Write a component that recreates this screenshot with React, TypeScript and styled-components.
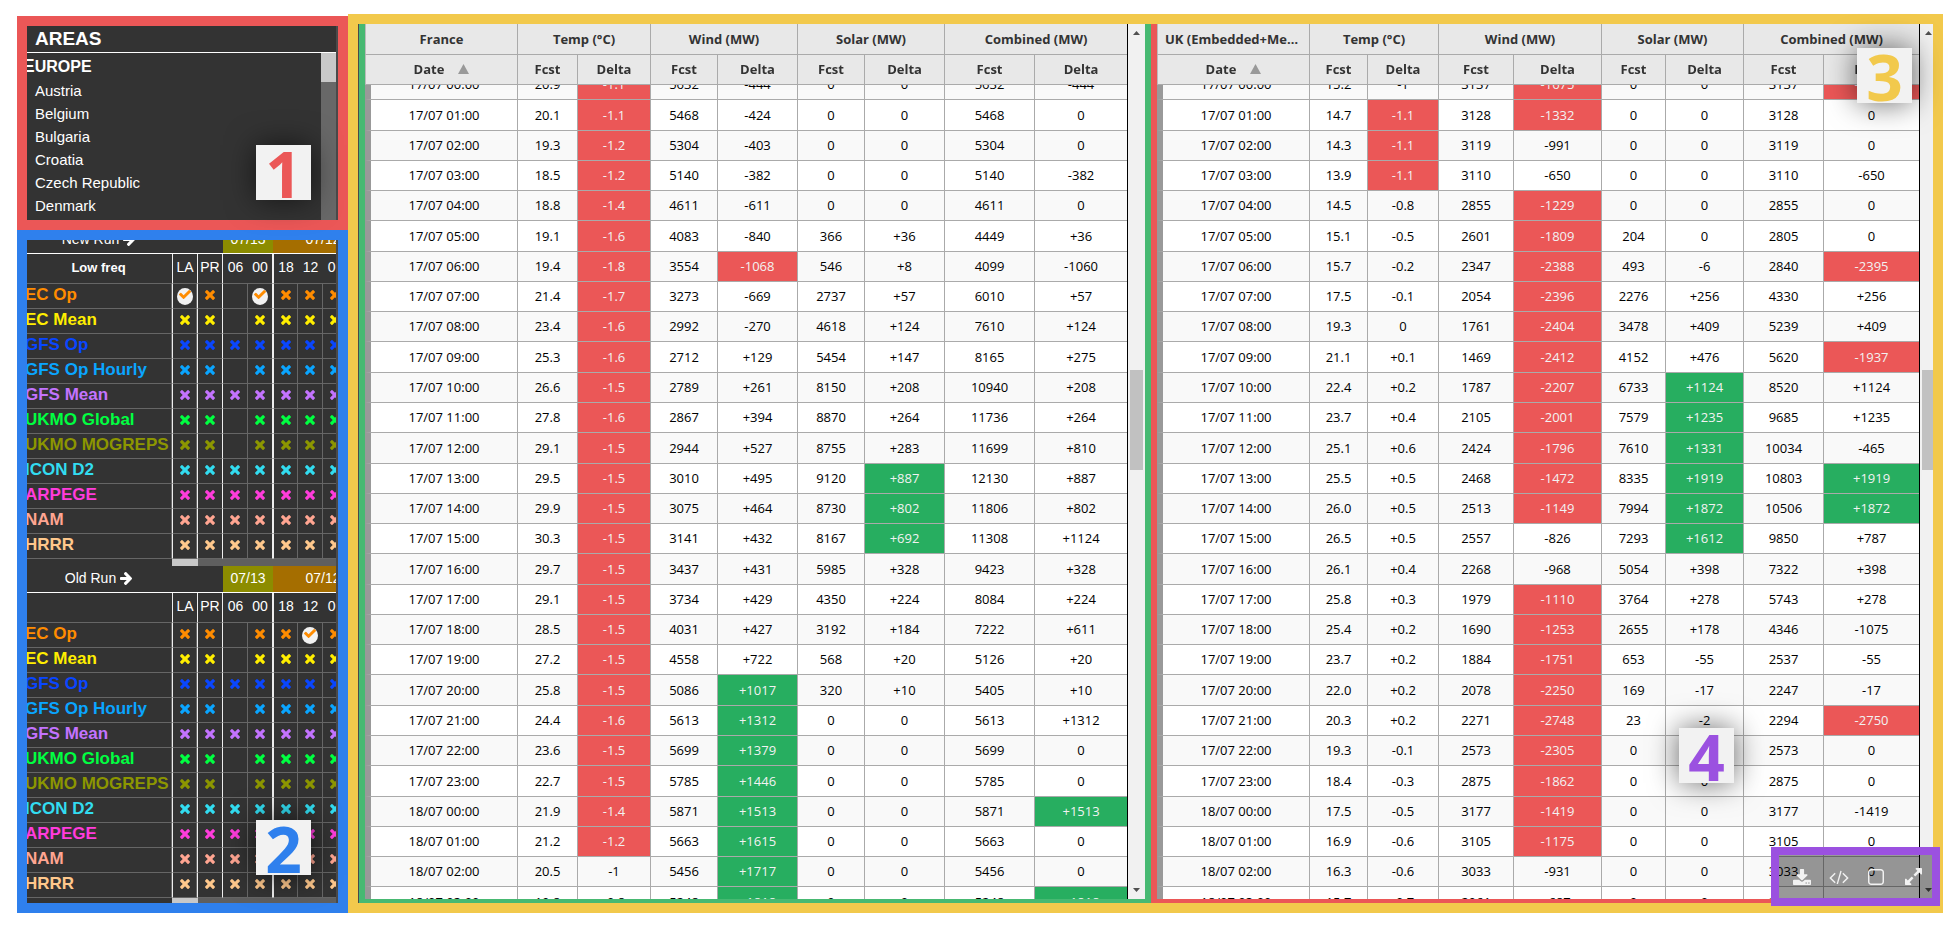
import React, { useLayoutEffect, useRef } from "react";
import styled, { createGlobalStyle } from "styled-components";

const GlobalStyle = createGlobalStyle`
  *, *::before, *::after { box-sizing: border-box; }
  body { margin: 0; background: #fff; }
  button { font: inherit; color: inherit; background: none; border: 0; padding: 0; cursor: pointer; }
  table { border-spacing: 0; table-layout: fixed; }
  th, td { padding: 0; }
`;

const red = "#eb5757";
const blue = "#2f80ed";
const yellow = "#f2c94c";
const purple = "#9b51e0";
const up = "#27ae60";
const dark = "#333";
const light = "#f2f2f2";

/* ---------- page frame ---------- */

const Page = styled.div`
  display: flex;
  height: 100vh;
  min-height: 500px;
  padding: 14px 13px 12px 17px;
`;

const Sidebar = styled.aside`
  display: flex;
  flex-direction: column;
  flex: 0 0 331px;
  min-width: 0;
  margin-top: 2px;
  color: #fff;
  font-family: "Liberation Sans", Arial, sans-serif;
`;

const Frame = styled.section<{ $color: string; $grow?: boolean }>`
  position: relative;
  display: flex;
  flex: ${(p) => (p.$grow ? "1 1 0" : "0 0 214px")};
  min-height: 0;
  border: 10px solid ${(p) => p.$color};
  background: #4a4a4a;
`;

const FrameBody = styled.div`
  flex: 1;
  min-width: 0;
  margin-right: 2px;
  overflow: hidden;
  background: ${dark};
`;

const Badge = styled.div<{ $color: string; $right: number; $top?: number; $bottom?: number }>`
  position: absolute;
  z-index: 2;
  right: ${(p) => p.$right}px;
  ${(p) => (p.$top !== undefined ? `top: ${p.$top}px;` : `bottom: ${p.$bottom}px;`)}
  width: 55px;
  height: 55px;
  background: ${light};
  box-shadow: 0 0 30px rgba(0, 0, 0, 0.6);
  color: ${(p) => p.$color};
  font: 700 64px/58px "Open Sans", sans-serif;
  text-align: center;
`;

/* ---------- areas list ---------- */

const AreasTitle = styled.h2`
  margin: 0;
  height: 27px;
  padding-left: 8px;
  border-bottom: 1px solid #fff;
  font-size: 19px;
  line-height: 26px;
`;

const AreasScroll = styled.div`
  display: flex;
  height: calc(100% - 27px);
`;

const AreasList = styled.ul`
  flex: 1;
  margin: 0;
  padding: 0;
  list-style: none;
  overflow: hidden;
`;

const Continent = styled.h3`
  margin: 0 0 0 -5px;
  font-size: 16px;
  line-height: 25px;
  text-transform: uppercase;

  &::first-letter {
    font-size: 19px;
  }
`;

const AreaButton = styled.button`
  display: block;
  width: 100%;
  padding-left: 8px;
  font-size: 15px;
  line-height: 23px;
  text-align: left;
`;

const AreasBar = styled.div`
  width: 15px;
  background: #686868;
`;

const AreasThumb = styled.div`
  height: 29px;
  background: #c8c8c8;
`;

/* ---------- model run tables ---------- */

const RunScroll = styled.div`
  margin: -13px 0 0 -2px;
`;

const RunTable = styled.table`
  width: 348px;
  font-size: 14px;
  text-align: center;
`;

const RunDay = styled.th<{ $bg?: string }>`
  height: 27px;
  padding-bottom: 2px;
  border-bottom: 1px solid #fff;
  background: ${(p) => p.$bg || dark};
  font-weight: 400;

  svg {
    width: 12px;
    height: 13px;
    margin-left: 4px;
    vertical-align: -2px;
  }
`;

const rule = { none: "0", thin: "1px solid #666", strong: "1px solid #eee" };
type Rule = keyof typeof rule;

const RunHour = styled.th<{ $left?: Rule; $right?: Rule }>`
  height: 30px;
  padding-bottom: 3px;
  border-bottom: 1px solid #666;
  border-left: ${(p) => rule[p.$left || "none"]};
  border-right: ${(p) => rule[p.$right || "none"]};
  font-weight: 400;
`;

const Freq = styled.span`
  font-size: 13px;
  font-weight: 700;
`;

const ModelName = styled.th<{ $color: string }>`
  height: 25px;
  padding-bottom: 3px;
  border-bottom: 1px solid #666;
  border-right: 1px solid #666;
  color: ${(p) => p.$color};
  font-size: 17px;
  font-weight: 700;
  line-height: 20px;
  text-align: left;
  white-space: nowrap;
`;

const RunCell = styled.td<{ $color: string; $left: Rule; $right: Rule }>`
  height: 25px;
  border-bottom: 1px solid #666;
  border-left: ${(p) => rule[p.$left]};
  border-right: ${(p) => rule[p.$right]};
  color: ${(p) => p.$color};
  line-height: 0;

  > svg {
    width: 10px;
    height: 10px;
    margin-bottom: 2px;
  }
`;

const Tick = styled.span`
  display: inline-flex;
  align-items: center;
  justify-content: center;
  width: 16px;
  height: 17px;
  padding-bottom: 3px;
  border-radius: 50%;
  background: ${light};

  svg {
    width: 12px;
    height: 9px;
  }
`;

const RunBar = styled.div`
  display: flex;
  height: 7px;
  padding-left: 147px;

  &::before {
    content: "";
    width: 26px;
    background: #c8c8c8;
  }

  &::after {
    content: "";
    flex: 1;
    background: #5f5f5f;
  }
`;

/* ---------- forecast panels ---------- */

const Main = styled.main`
  position: relative;
  flex: 1;
  min-width: 0;
  border: 10px solid ${yellow};
  color: #000;
  font: 13px/20px "Open Sans", sans-serif;
`;

const PanelClip = styled.div`
  height: 100%;
  overflow: hidden;
  border-left: 1px solid #4a4a4a;
`;

const Panels = styled.div`
  display: flex;
  height: 100%;
  margin-right: -10px;
`;

const Panel = styled.section<{ $color: string }>`
  display: flex;
  flex: 1 1 0;
  min-width: 0;
  border: solid ${(p) => p.$color};
  border-width: 0 6px 4px;
`;

const PanelScroll = styled.div`
  flex: 1;
  min-width: 0;
  overflow-y: auto;
  scrollbar-width: none;
`;

const PanelBar = styled.div`
  display: flex;
  flex: 0 0 18px;
  flex-direction: column;
  align-items: center;
  justify-content: space-between;
  padding: 7px 0;
  border-left: 1px solid #000;
  background: linear-gradient(#c1c1c1, #c1c1c1) 2px 346px / 13px 100px no-repeat #f1f1f1;
  color: #505050;

  svg {
    width: 7px;
    height: 4px;
  }
`;

const Grid = styled.table`
  width: 100%;
  text-align: center;

  thead {
    position: sticky;
    top: 0;
    z-index: 1;
  }
`;

const Col = styled.col<{ $w: number }>`
  width: ${(p) => p.$w}px;
`;

const GroupHead = styled.th`
  height: 31px;
  padding: 0 7px 1px;
  border-right: 1px solid #aaa;
  border-bottom: 1px solid #aaa;
  background: #e8e8e8;
  color: ${dark};
  font-weight: 700;
  overflow: hidden;
  text-overflow: ellipsis;
  white-space: nowrap;

  &:first-child { border-left: 1px solid #bbb; }
  &:last-child { border-right: 0; }
`;

const ColHead = styled(GroupHead)`
  height: 30px;
`;

const SortButton = styled.button`
  display: inline-flex;
  align-items: center;
  gap: 14px;
  font-weight: 700;

  svg {
    width: 11px;
    height: 10px;
    color: #999;
  }
`;

const HourRow = styled.tr`
  height: 30px;
  background: #fff;

  &:nth-child(odd) { background: #f9f9f9; }
  &:nth-child(11n + 2), &:nth-child(11n + 6), &:nth-child(11n + 10) { height: 31px; }
`;

const Cell = styled.td<{ $tone?: string }>`
  padding-bottom: 1px;
  border-right: 1px solid #aaa;
  border-bottom: 1px solid #aaa;
  background: ${(p) => p.$tone || "transparent"};
  color: ${(p) => (p.$tone ? light : "#000")};

  &:first-child { border-left: 6px solid #999; }
  &:last-child { border-right: 0; }
`;

const Toolbar = styled.div`
  position: absolute;
  z-index: 3;
  right: -7px;
  bottom: -3px;
  display: flex;
  width: 169px;
  height: 59px;
  padding: 0 0 0 4px;
  border: 8px solid ${purple};
  background: rgba(0, 0, 0, 0.4);
  background-clip: padding-box;
`;

const ToolButton = styled.button`
  display: flex;
  flex: 1;
  align-items: center;
  justify-content: center;
  color: ${light};

  svg { display: block; }
`;

/* ---------- icons ---------- */

const Glyph = ({ box, d, w, h }: { box: string; d: string; w?: number; h?: number }) => (
  <svg viewBox={box} width={w} height={h} fill="currentColor" preserveAspectRatio="none" aria-hidden="true">
    <path d={d} />
  </svg>
);

const Cross = () => (
  <Glyph
    box="302 366 1188 1188"
    d="M1490 1322q0 40-28 68l-136 136q-28 28-68 28t-68-28l-294-294-294 294q-28 28-68 28t-68-28l-136-136q-28-28-28-68t28-68l294-294-294-294q-28-28-28-68t28-68l136-136q28-28 68-28t68 28l294 294 294-294q28-28 68-28t68 28l136 136q28 28 28 68t-28 68l-294 294 294 294q28 28 28 68z"
  />
);

const Check = () => (
  <Glyph
    box="121 334 1550 1188"
    d="M1671 566q0 40-28 68l-724 724-136 136q-28 28-68 28t-68-28l-136-136-362-362q-28-28-28-68t28-68l136-136q28-28 68-28t68 28l294 295 656-657q28-28 68-28t68 28l136 136q28 28 28 68z"
  />
);

const Arrow = () => (
  <Glyph
    box="128 181 1472 1558"
    d="M1600 960q0 54-37 91l-651 651q-39 37-91 37-51 0-90-37l-75-75q-38-38-38-91t38-91l293-293h-704q-52 0-84.500-37.500t-32.500-90.500v-128q0-53 32.500-90.500t84.500-37.500h704l-293-294q-38-36-38-90t38-90l75-75q38-38 90-38 53 0 91 38l651 651q37 35 37 90z"
  />
);

const tools = [
  {
    label: "Download",
    box: "64 0 1664 1536",
    w: 18,
    h: 16,
    d: "M1344 1344q0-26-19-45t-45-19-45 19-19 45 19 45 45 19 45-19 19-45zm256 0q0-26-19-45t-45-19-45 19-19 45 19 45 45 19 45-19 19-45zm128-224v320q0 40-28 68t-68 28h-1472q-40 0-68-28t-28-68v-320q0-40 28-68t68-28h465l135 136q58 56 136 56t136-56l136-136h464q40 0 68 28t28 68zm-325-569q17 41-14 70l-448 448q-18 19-45 19t-45-19l-448-448q-31-29-14-70 17-39 59-39h256v-448q0-26 19-45t45-19h256q26 0 45 19t19 45v448h256q42 0 59 39z",
  },
  {
    label: "Embed code",
    box: "0 192 1920 1344",
    w: 20,
    h: 14,
    d: "M617 1399l-50 50q-10 10-23 10t-23-10l-466-466q-10-10-10-23t10-23l466-466q10-10 23-10t23 10l50 50q10 10 10 23t-10 23l-393 393 393 393q10 10 10 23t-10 23zm591-1067l-373 1291q-4 13-15.5 19.5t-23.5 2.5l-62-17q-13-4-19.500-15.500t-2.500-24.500l373-1291q4-13 15.500-19.500t23.500-2.500l62 17q13 4 19.500 15.500t2.500 24.500zm657 651l-466 466q-10 10-23 10t-23-10l-50-50q-10-10-10-23t10-23l393-393-393-393q-10-10-10-23t10-23l50-50q10-10 23-10t23 10l466 466q10 10 10 23t-10 23z",
  },
  {
    label: "Single view",
    box: "192 128 1408 1408",
    w: 16,
    h: 16,
    d: "M1312 256h-832q-66 0-113 47t-47 113v832q0 66 47 113t113 47h832q66 0 113-47t47-113v-832q0-66-47-113t-113-47zm288 160v832q0 119-84.500 203.500t-203.500 84.500h-832q-119 0-203.500-84.500t-84.500-203.500v-832q0-119 84.500-203.500t203.500-84.500h832q119 0 203.500 84.500t84.500 203.500z",
  },
  {
    label: "Full screen",
    box: "128 128 1536 1536",
    w: 17,
    h: 17,
    d: "M883 1056q0 13-10 23l-332 332 144 144q19 19 19 45t-19 45-45 19h-448q-26 0-45-19t-19-45v-448q0-26 19-45t45-19 45 19l144 144 332-332q10-10 23-10t23 10l114 114q10 10 10 23zm781-864v448q0 26-19 45t-45 19-45-19l-144-144-332 332q-10 10-23 10t-23-10l-114-114q-10-10-10-23t10-23l332-332-144-144q-19-19-19-45t19-45 45-19h448q26 0 45 19t19 45z",
  },
];

/* ---------- data ---------- */

const areas = ["Austria", "Belgium", "Bulgaria", "Croatia", "Czech Republic", "Denmark"];

const models = [
  { name: "EC Op", color: "#ff8c00", has06: false },
  { name: "EC Mean", color: "#ffee00", has06: false },
  { name: "GFS Op", color: "#0a46ff", has06: true },
  { name: "GFS Op Hourly", color: "#0aa5ff", has06: false },
  { name: "GFS Mean", color: "#c373ff", has06: true },
  { name: "UKMO Global", color: "#00ff41", has06: false },
  { name: "UKMO MOGREPS", color: "#8c9600", has06: false },
  { name: "ICON D2", color: "#32dcf0", has06: true },
  { name: "ARPEGE", color: "#ff3cdc", has06: true },
  { name: "NAM", color: "#ffa591", has06: true },
  { name: "HRRR", color: "#ffc88c", has06: true },
];

const runColumns: { label: string; width: number; left: Rule; right: Rule }[] = [
  { label: "LA", width: 25, left: "strong", right: "thin" },
  { label: "PR", width: 26, left: "strong", right: "strong" },
  { label: "06", width: 25, left: "none", right: "thin" },
  { label: "00", width: 25, left: "none", right: "strong" },
  { label: "18", width: 25, left: "strong", right: "thin" },
  { label: "12", width: 25, left: "none", right: "thin" },
  { label: "06", width: 25, left: "none", right: "thin" },
  { label: "00", width: 25, left: "none", right: "thin" },
];

const france = `17/07 00:00 20.9 -1.1 5632 -444 0 0 5632 -444
17/07 01:00 20.1 -1.1 5468 -424 0 0 5468 0
17/07 02:00 19.3 -1.2 5304 -403 0 0 5304 0
17/07 03:00 18.5 -1.2 5140 -382 0 0 5140 -382
17/07 04:00 18.8 -1.4 4611 -611 0 0 4611 0
17/07 05:00 19.1 -1.6 4083 -840 366 +36 4449 +36
17/07 06:00 19.4 -1.8 3554 -1068 546 +8 4099 -1060
17/07 07:00 21.4 -1.7 3273 -669 2737 +57 6010 +57
17/07 08:00 23.4 -1.6 2992 -270 4618 +124 7610 +124
17/07 09:00 25.3 -1.6 2712 +129 5454 +147 8165 +275
17/07 10:00 26.6 -1.5 2789 +261 8150 +208 10940 +208
17/07 11:00 27.8 -1.6 2867 +394 8870 +264 11736 +264
17/07 12:00 29.1 -1.5 2944 +527 8755 +283 11699 +810
17/07 13:00 29.5 -1.5 3010 +495 9120 +887 12130 +887
17/07 14:00 29.9 -1.5 3075 +464 8730 +802 11806 +802
17/07 15:00 30.3 -1.5 3141 +432 8167 +692 11308 +1124
17/07 16:00 29.7 -1.5 3437 +431 5985 +328 9423 +328
17/07 17:00 29.1 -1.5 3734 +429 4350 +224 8084 +224
17/07 18:00 28.5 -1.5 4031 +427 3192 +184 7222 +611
17/07 19:00 27.2 -1.5 4558 +722 568 +20 5126 +20
17/07 20:00 25.8 -1.5 5086 +1017 320 +10 5405 +10
17/07 21:00 24.4 -1.6 5613 +1312 0 0 5613 +1312
17/07 22:00 23.6 -1.5 5699 +1379 0 0 5699 0
17/07 23:00 22.7 -1.5 5785 +1446 0 0 5785 0
18/07 00:00 21.9 -1.4 5871 +1513 0 0 5871 +1513
18/07 01:00 21.2 -1.2 5663 +1615 0 0 5663 0
18/07 02:00 20.5 -1 5456 +1717 0 0 5456 0
18/07 03:00 19.8 -0.8 5248 +1818 0 0 5248 +1818`;

const uk = `17/07 00:00 15.2 -1 3137 -1675 0 0 3137 -1675
17/07 01:00 14.7 -1.1 3128 -1332 0 0 3128 0
17/07 02:00 14.3 -1.1 3119 -991 0 0 3119 0
17/07 03:00 13.9 -1.1 3110 -650 0 0 3110 -650
17/07 04:00 14.5 -0.8 2855 -1229 0 0 2855 0
17/07 05:00 15.1 -0.5 2601 -1809 204 0 2805 0
17/07 06:00 15.7 -0.2 2347 -2388 493 -6 2840 -2395
17/07 07:00 17.5 -0.1 2054 -2396 2276 +256 4330 +256
17/07 08:00 19.3 0 1761 -2404 3478 +409 5239 +409
17/07 09:00 21.1 +0.1 1469 -2412 4152 +476 5620 -1937
17/07 10:00 22.4 +0.2 1787 -2207 6733 +1124 8520 +1124
17/07 11:00 23.7 +0.4 2105 -2001 7579 +1235 9685 +1235
17/07 12:00 25.1 +0.6 2424 -1796 7610 +1331 10034 -465
17/07 13:00 25.5 +0.5 2468 -1472 8335 +1919 10803 +1919
17/07 14:00 26.0 +0.5 2513 -1149 7994 +1872 10506 +1872
17/07 15:00 26.5 +0.5 2557 -826 7293 +1612 9850 +787
17/07 16:00 26.1 +0.4 2268 -968 5054 +398 7322 +398
17/07 17:00 25.8 +0.3 1979 -1110 3764 +278 5743 +278
17/07 18:00 25.4 +0.2 1690 -1253 2655 +178 4346 -1075
17/07 19:00 23.7 +0.2 1884 -1751 653 -55 2537 -55
17/07 20:00 22.0 +0.2 2078 -2250 169 -17 2247 -17
17/07 21:00 20.3 +0.2 2271 -2748 23 -2 2294 -2750
17/07 22:00 19.3 -0.1 2573 -2305 0 0 2573 0
17/07 23:00 18.4 -0.3 2875 -1862 0 0 2875 0
18/07 00:00 17.5 -0.5 3177 -1419 0 0 3177 -1419
18/07 01:00 16.9 -0.6 3105 -1175 0 0 3105 0
18/07 02:00 16.3 -0.6 3033 -931 0 0 3033 0
18/07 03:00 15.7 -0.7 2961 -687 0 0 2961 -687`;

const groups = ["Temp (°C)", "Wind (MW)", "Solar (MW)", "Combined (MW)"];
/* A delta beyond its column's limit is highlighted. */
const limits: Record<number, number> = { 2: 1.1, 4: 1000, 6: 500, 8: 1500 };

const toRows = (text: string) =>
  text.split("\n").map((line) => {
    const [day, hour, ...values] = line.split(" ");
    return [`${day} ${hour}`, ...values];
  });

const toneOf = (value: string, column: number) => {
  const limit = limits[column];
  const n = Number(value);
  if (!limit || Math.abs(n) < limit) return undefined;
  return n > 0 ? up : red;
};

/* ---------- components ---------- */

function RunBlock({ title, freq, ticks }: { title: string; freq: string; ticks: number[] }) {
  return (
    <>
      <RunTable>
        <colgroup>
          <Col $w={147} />
          {runColumns.map((c, i) => (
            <Col key={i} $w={c.width} />
          ))}
        </colgroup>
        <thead>
          <tr>
            <RunDay>
              {title}
              <Arrow />
            </RunDay>
            <RunDay colSpan={2} />
            <RunDay colSpan={2} $bg="#8c8c00">07/13</RunDay>
            <RunDay colSpan={4} $bg="#a56e00">07/12</RunDay>
          </tr>
          <tr>
            <RunHour>
              <Freq>{freq}</Freq>
            </RunHour>
            {runColumns.map((c, i) => (
              <RunHour
                key={i}
                $left={c.left === "strong" ? "strong" : "none"}
                $right={c.right === "strong" ? "strong" : "none"}
              >
                {c.label}
              </RunHour>
            ))}
          </tr>
        </thead>
        <tbody>
          {models.map((m, row) => (
            <tr key={m.name}>
              <ModelName scope="row" $color={m.color}>
                {m.name}
              </ModelName>
              {runColumns.map((c, i) => (
                <RunCell key={i} $color={m.color} $left={c.left} $right={c.right}>
                  {row === 0 && ticks.includes(i) ? (
                    <Tick>
                      <Check />
                    </Tick>
                  ) : i === 2 && !m.has06 ? null : (
                    <Cross />
                  )}
                </RunCell>
              ))}
            </tr>
          ))}
        </tbody>
      </RunTable>
      <RunBar />
    </>
  );
}

function ForecastPanel({ title, color, widths, data }: { title: string; color: string; widths: number[]; data: string }) {
  const scroller = useRef<HTMLDivElement>(null);
  useLayoutEffect(() => {
    if (scroller.current) scroller.current.scrollTop = 15;
  }, []);
  return (
    <Panel $color={color}>
      <PanelScroll ref={scroller}>
        <Grid>
          <colgroup>
            {widths.map((w, i) => (
              <Col key={i} $w={w} />
            ))}
          </colgroup>
          <thead>
            <tr>
              <GroupHead>{title}</GroupHead>
              {groups.map((g) => (
                <GroupHead key={g} colSpan={2}>
                  {g}
                </GroupHead>
              ))}
            </tr>
            <tr>
              <ColHead>
                <SortButton>
                  Date
                  <Glyph box="0 0 11 10" d="M5.500 0L11 10H0z" />
                </SortButton>
              </ColHead>
              {groups.flatMap((g) => [
                <ColHead key={g + "f"}>Fcst</ColHead>,
                <ColHead key={g + "d"}>Delta</ColHead>,
              ])}
            </tr>
          </thead>
          <tbody>
            {toRows(data).map((row) => (
              <HourRow key={row[0]}>
                {row.map((value, i) => (
                  <Cell key={i} $tone={toneOf(value, i)}>
                    {value}
                  </Cell>
                ))}
              </HourRow>
            ))}
          </tbody>
        </Grid>
      </PanelScroll>
      <PanelBar>
        <Glyph box="0 0 7 4" d="M3.500 0L7 4H0z" />
        <Glyph box="0 0 7 4" d="M0 0H7L3.500 4z" />
      </PanelBar>
    </Panel>
  );
}

export default function App() {
  return (
    <>
      <GlobalStyle />
      <Page>
        <Sidebar>
          <Frame $color={red}>
            <FrameBody>
              <AreasTitle>AREAS</AreasTitle>
              <AreasScroll>
                <AreasList>
                  <li>
                    <Continent>Europe</Continent>
                  </li>
                  {areas.map((a) => (
                    <li key={a}>
                      <AreaButton>{a}</AreaButton>
                    </li>
                  ))}
                </AreasList>
                <AreasBar>
                  <AreasThumb />
                </AreasBar>
              </AreasScroll>
            </FrameBody>
            <Badge $color={red} $right={27} $bottom={20}>1</Badge>
          </Frame>
          <Frame $color={blue} $grow>
            <FrameBody>
              <RunScroll>
                <RunBlock title="New Run" freq="Low freq" ticks={[0, 3]} />
                <RunBlock title="Old Run" freq="" ticks={[5]} />
              </RunScroll>
            </FrameBody>
            <Badge $color={blue} $right={27} $bottom={28}>2</Badge>
          </Frame>
        </Sidebar>
        <Main>
          <PanelClip>
            <Panels>
              <ForecastPanel
                title="France"
                color="#47b972"
                widths={[153, 60, 73, 67, 80, 67, 80, 90, 92]}
                data={france}
              />
              <ForecastPanel
                title="UK (Embedded+Metered)"
                color={red}
                widths={[153, 58, 71, 75, 88, 64, 78, 80, 95]}
                data={uk}
              />
            </Panels>
          </PanelClip>
          <Badge $color={yellow} $right={21} $top={24}>3</Badge>
          <Badge $color={purple} $right={199} $bottom={120}>4</Badge>
          <Toolbar>
            {tools.map((t) => (
              <ToolButton key={t.label} aria-label={t.label}>
                <Glyph box={t.box} d={t.d} w={t.w} h={t.h} />
              </ToolButton>
            ))}
          </Toolbar>
        </Main>
      </Page>
    </>
  );
}
